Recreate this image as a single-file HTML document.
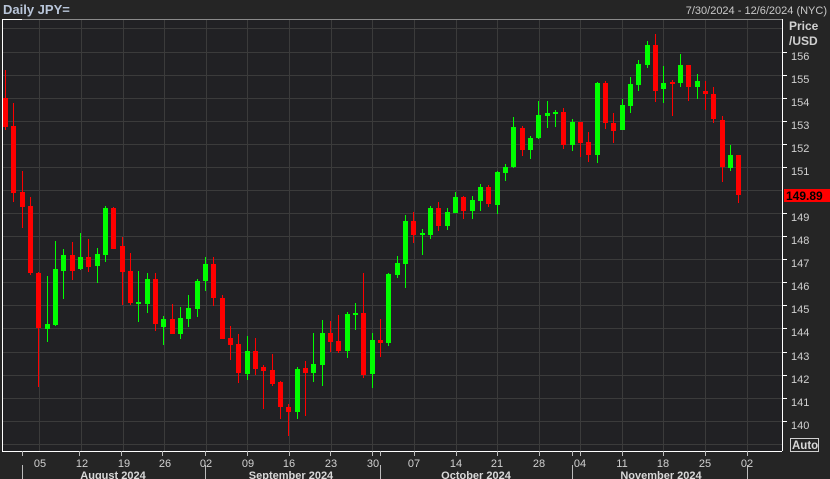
<!DOCTYPE html>
<html><head><meta charset="utf-8"><style>
html,body{margin:0;padding:0;background:#242424;}
svg{display:block;font-family:"Liberation Sans",sans-serif;}
</style></head><body>
<svg width="830" height="479" viewBox="0 0 830 479" xmlns="http://www.w3.org/2000/svg">
<rect width="830" height="479" fill="#252525"/>
<rect x="2" y="19" width="780" height="432" fill="#212124"/>
<g stroke="#3b3b3b" stroke-width="1">
<line x1="2" y1="28.5" x2="782" y2="28.5"/><line x1="2" y1="52.5" x2="782" y2="52.5"/><line x1="2" y1="75.5" x2="782" y2="75.5"/><line x1="2" y1="98.5" x2="782" y2="98.5"/><line x1="2" y1="121.5" x2="782" y2="121.5"/><line x1="2" y1="144.5" x2="782" y2="144.5"/><line x1="2" y1="167.5" x2="782" y2="167.5"/><line x1="2" y1="190.5" x2="782" y2="190.5"/><line x1="2" y1="213.5" x2="782" y2="213.5"/><line x1="2" y1="236.5" x2="782" y2="236.5"/><line x1="2" y1="259.5" x2="782" y2="259.5"/><line x1="2" y1="282.5" x2="782" y2="282.5"/><line x1="2" y1="305.5" x2="782" y2="305.5"/><line x1="2" y1="328.5" x2="782" y2="328.5"/><line x1="2" y1="352.5" x2="782" y2="352.5"/><line x1="2" y1="375.5" x2="782" y2="375.5"/><line x1="2" y1="398.5" x2="782" y2="398.5"/><line x1="2" y1="421.5" x2="782" y2="421.5"/><line x1="2" y1="444.5" x2="782" y2="444.5"/>
<line x1="39.5" y1="19" x2="39.5" y2="451"/><line x1="81.5" y1="19" x2="81.5" y2="451"/><line x1="123.5" y1="19" x2="123.5" y2="451"/><line x1="164.5" y1="19" x2="164.5" y2="451"/><line x1="206.5" y1="19" x2="206.5" y2="451"/><line x1="247.5" y1="19" x2="247.5" y2="451"/><line x1="289.5" y1="19" x2="289.5" y2="451"/><line x1="331.5" y1="19" x2="331.5" y2="451"/><line x1="372.5" y1="19" x2="372.5" y2="451"/><line x1="414.5" y1="19" x2="414.5" y2="451"/><line x1="456.5" y1="19" x2="456.5" y2="451"/><line x1="497.5" y1="19" x2="497.5" y2="451"/><line x1="539.5" y1="19" x2="539.5" y2="451"/><line x1="580.5" y1="19" x2="580.5" y2="451"/><line x1="622.5" y1="19" x2="622.5" y2="451"/><line x1="663.5" y1="19" x2="663.5" y2="451"/><line x1="705.5" y1="19" x2="705.5" y2="451"/><line x1="747.5" y1="19" x2="747.5" y2="451"/>
</g>
<line x1="2" y1="19.5" x2="782" y2="19.5" stroke="#8a8a8a"/>
<line x1="2" y1="19.5" x2="22" y2="19.5" stroke="#ffffff"/>
<line x1="2.5" y1="19" x2="2.5" y2="451" stroke="#ffffff"/>
<line x1="2" y1="451.5" x2="782" y2="451.5" stroke="#ffffff"/>
<line x1="782.5" y1="19" x2="782.5" y2="451" stroke="#ffffff"/>
<g fill="#ff0000" stroke="#ff0000">
<line x1="5.5" y1="70" x2="5.5" y2="130"/><rect x="3" y="98" width="5" height="29" stroke="none"/>
<line x1="13.5" y1="103" x2="13.5" y2="202"/><rect x="11" y="126" width="5" height="67" stroke="none"/>
<line x1="22.5" y1="171" x2="22.5" y2="228"/><rect x="20" y="192" width="5" height="15" stroke="none"/>
<line x1="30.5" y1="197" x2="30.5" y2="275"/><rect x="28" y="206" width="5" height="67" stroke="none"/>
<line x1="38.5" y1="272" x2="38.5" y2="387"/><rect x="36" y="273" width="5" height="55" stroke="none"/>
<line x1="72.5" y1="242" x2="72.5" y2="280"/><rect x="70" y="255" width="5" height="16" stroke="none"/>
<line x1="88.5" y1="239" x2="88.5" y2="272"/><rect x="86" y="257" width="5" height="10" stroke="none"/>
<line x1="113.5" y1="207" x2="113.5" y2="249"/><rect x="111" y="208" width="5" height="41" stroke="none"/>
<line x1="122.5" y1="237" x2="122.5" y2="305"/><rect x="120" y="246" width="5" height="26" stroke="none"/>
<line x1="130.5" y1="253" x2="130.5" y2="305"/><rect x="128" y="271" width="5" height="32" stroke="none"/>
<line x1="155.5" y1="273" x2="155.5" y2="331"/><rect x="153" y="279" width="5" height="45" stroke="none"/>
<line x1="172.5" y1="304" x2="172.5" y2="333"/><rect x="170" y="319" width="5" height="15" stroke="none"/>
<line x1="213.5" y1="257" x2="213.5" y2="306"/><rect x="211" y="264" width="5" height="34" stroke="none"/>
<line x1="222.5" y1="295" x2="222.5" y2="339"/><rect x="220" y="298" width="5" height="41" stroke="none"/>
<line x1="230.5" y1="326" x2="230.5" y2="360"/><rect x="228" y="338" width="5" height="7" stroke="none"/>
<line x1="238.5" y1="334" x2="238.5" y2="383"/><rect x="236" y="344" width="5" height="29" stroke="none"/>
<line x1="255.5" y1="338" x2="255.5" y2="375"/><rect x="253" y="351" width="5" height="18" stroke="none"/>
<line x1="263.5" y1="365" x2="263.5" y2="409"/><rect x="261" y="367" width="5" height="4" stroke="none"/>
<line x1="272.5" y1="354" x2="272.5" y2="386"/><rect x="270" y="370" width="5" height="14" stroke="none"/>
<line x1="280.5" y1="381" x2="280.5" y2="419"/><rect x="278" y="382" width="5" height="25" stroke="none"/>
<line x1="288.5" y1="404" x2="288.5" y2="436"/><rect x="286" y="407" width="5" height="5" stroke="none"/>
<line x1="305.5" y1="361" x2="305.5" y2="416"/><rect x="303" y="368" width="5" height="5" stroke="none"/>
<line x1="330.5" y1="321" x2="330.5" y2="352"/><rect x="328" y="333" width="5" height="9" stroke="none"/>
<line x1="338.5" y1="315" x2="338.5" y2="353"/><rect x="336" y="341" width="5" height="10" stroke="none"/>
<line x1="363.5" y1="273" x2="363.5" y2="378"/><rect x="361" y="313" width="5" height="62" stroke="none"/>
<line x1="380.5" y1="319" x2="380.5" y2="357"/><rect x="378" y="340" width="5" height="3" stroke="none"/>
<line x1="413.5" y1="212" x2="413.5" y2="243"/><rect x="411" y="221" width="5" height="14" stroke="none"/>
<line x1="438.5" y1="202" x2="438.5" y2="231"/><rect x="436" y="208" width="5" height="18" stroke="none"/>
<line x1="463.5" y1="196" x2="463.5" y2="219"/><rect x="461" y="197" width="5" height="14" stroke="none"/>
<line x1="488.5" y1="185" x2="488.5" y2="207"/><rect x="486" y="187" width="5" height="17" stroke="none"/>
<line x1="522.5" y1="126" x2="522.5" y2="156"/><rect x="520" y="128" width="5" height="22" stroke="none"/>
<line x1="563.5" y1="108" x2="563.5" y2="149"/><rect x="561" y="112" width="5" height="33" stroke="none"/>
<line x1="580.5" y1="122" x2="580.5" y2="157"/><rect x="578" y="122" width="5" height="21" stroke="none"/>
<line x1="588.5" y1="132" x2="588.5" y2="162"/><rect x="586" y="142" width="5" height="13" stroke="none"/>
<line x1="605.5" y1="81" x2="605.5" y2="129"/><rect x="603" y="83" width="5" height="40" stroke="none"/>
<line x1="613.5" y1="113" x2="613.5" y2="143"/><rect x="611" y="123" width="5" height="8" stroke="none"/>
<line x1="655.5" y1="34" x2="655.5" y2="102"/><rect x="653" y="45" width="5" height="46" stroke="none"/>
<line x1="672.5" y1="80" x2="672.5" y2="116"/><rect x="670" y="82" width="5" height="2" stroke="none"/>
<line x1="688.5" y1="65" x2="688.5" y2="101"/><rect x="686" y="65" width="5" height="22" stroke="none"/>
<line x1="705.5" y1="81" x2="705.5" y2="110"/><rect x="703" y="91" width="5" height="3" stroke="none"/>
<line x1="713.5" y1="87" x2="713.5" y2="123"/><rect x="711" y="94" width="5" height="25" stroke="none"/>
<line x1="722.5" y1="116" x2="722.5" y2="182"/><rect x="720" y="120" width="5" height="47" stroke="none"/>
<line x1="738.5" y1="155" x2="738.5" y2="203"/><rect x="736" y="155" width="5" height="40" stroke="none"/>
</g>
<g fill="#00ff00" stroke="#00ff00">
<line x1="47.5" y1="276" x2="47.5" y2="342"/><rect x="45" y="324" width="5" height="5" stroke="none"/>
<line x1="55.5" y1="241" x2="55.5" y2="326"/><rect x="53" y="269" width="5" height="56" stroke="none"/>
<line x1="63.5" y1="249" x2="63.5" y2="299"/><rect x="61" y="255" width="5" height="16" stroke="none"/>
<line x1="80.5" y1="233" x2="80.5" y2="270"/><rect x="78" y="257" width="5" height="12" stroke="none"/>
<line x1="97.5" y1="248" x2="97.5" y2="283"/><rect x="95" y="254" width="5" height="12" stroke="none"/>
<line x1="105.5" y1="206" x2="105.5" y2="262"/><rect x="103" y="208" width="5" height="47" stroke="none"/>
<line x1="138.5" y1="271" x2="138.5" y2="322"/><rect x="136" y="302" width="5" height="2" stroke="none"/>
<line x1="147.5" y1="273" x2="147.5" y2="313"/><rect x="145" y="279" width="5" height="25" stroke="none"/>
<line x1="163.5" y1="316" x2="163.5" y2="345"/><rect x="161" y="319" width="5" height="8" stroke="none"/>
<line x1="180.5" y1="307" x2="180.5" y2="339"/><rect x="178" y="318" width="5" height="16" stroke="none"/>
<line x1="188.5" y1="295" x2="188.5" y2="327"/><rect x="186" y="308" width="5" height="11" stroke="none"/>
<line x1="197.5" y1="279" x2="197.5" y2="317"/><rect x="195" y="281" width="5" height="28" stroke="none"/>
<line x1="205.5" y1="257" x2="205.5" y2="291"/><rect x="203" y="264" width="5" height="17" stroke="none"/>
<line x1="247.5" y1="336" x2="247.5" y2="380"/><rect x="245" y="351" width="5" height="23" stroke="none"/>
<line x1="297.5" y1="367" x2="297.5" y2="419"/><rect x="295" y="369" width="5" height="43" stroke="none"/>
<line x1="313.5" y1="333" x2="313.5" y2="382"/><rect x="311" y="364" width="5" height="9" stroke="none"/>
<line x1="322.5" y1="320" x2="322.5" y2="386"/><rect x="320" y="333" width="5" height="32" stroke="none"/>
<line x1="347.5" y1="312" x2="347.5" y2="358"/><rect x="345" y="314" width="5" height="37" stroke="none"/>
<line x1="355.5" y1="303" x2="355.5" y2="330"/><rect x="353" y="313" width="5" height="2" stroke="none"/>
<line x1="372.5" y1="333" x2="372.5" y2="388"/><rect x="370" y="340" width="5" height="34" stroke="none"/>
<line x1="388.5" y1="273" x2="388.5" y2="346"/><rect x="386" y="274" width="5" height="69" stroke="none"/>
<line x1="397.5" y1="256" x2="397.5" y2="278"/><rect x="395" y="263" width="5" height="12" stroke="none"/>
<line x1="405.5" y1="215" x2="405.5" y2="288"/><rect x="403" y="221" width="5" height="43" stroke="none"/>
<line x1="422.5" y1="229" x2="422.5" y2="255"/><rect x="420" y="233" width="5" height="2" stroke="none"/>
<line x1="430.5" y1="206" x2="430.5" y2="239"/><rect x="428" y="208" width="5" height="27" stroke="none"/>
<line x1="447.5" y1="208" x2="447.5" y2="230"/><rect x="445" y="212" width="5" height="14" stroke="none"/>
<line x1="455.5" y1="192" x2="455.5" y2="213"/><rect x="453" y="197" width="5" height="16" stroke="none"/>
<line x1="472.5" y1="196" x2="472.5" y2="219"/><rect x="470" y="200" width="5" height="11" stroke="none"/>
<line x1="480.5" y1="184" x2="480.5" y2="211"/><rect x="478" y="187" width="5" height="14" stroke="none"/>
<line x1="497.5" y1="171" x2="497.5" y2="214"/><rect x="495" y="172" width="5" height="33" stroke="none"/>
<line x1="505.5" y1="164" x2="505.5" y2="181"/><rect x="503" y="167" width="5" height="6" stroke="none"/>
<line x1="513.5" y1="117" x2="513.5" y2="168"/><rect x="511" y="127" width="5" height="40" stroke="none"/>
<line x1="530.5" y1="136" x2="530.5" y2="159"/><rect x="528" y="138" width="5" height="12" stroke="none"/>
<line x1="538.5" y1="101" x2="538.5" y2="139"/><rect x="536" y="115" width="5" height="23" stroke="none"/>
<line x1="547.5" y1="101" x2="547.5" y2="128"/><rect x="545" y="113" width="5" height="3" stroke="none"/>
<line x1="555.5" y1="110" x2="555.5" y2="127"/><rect x="553" y="112" width="5" height="2" stroke="none"/>
<line x1="572.5" y1="119" x2="572.5" y2="151"/><rect x="570" y="122" width="5" height="23" stroke="none"/>
<line x1="597.5" y1="82" x2="597.5" y2="163"/><rect x="595" y="83" width="5" height="72" stroke="none"/>
<line x1="622.5" y1="99" x2="622.5" y2="130"/><rect x="620" y="105" width="5" height="25" stroke="none"/>
<line x1="630.5" y1="77" x2="630.5" y2="113"/><rect x="628" y="84" width="5" height="22" stroke="none"/>
<line x1="638.5" y1="60" x2="638.5" y2="91"/><rect x="636" y="64" width="5" height="21" stroke="none"/>
<line x1="647.5" y1="41" x2="647.5" y2="68"/><rect x="645" y="45" width="5" height="20" stroke="none"/>
<line x1="663.5" y1="66" x2="663.5" y2="103"/><rect x="661" y="83" width="5" height="6" stroke="none"/>
<line x1="680.5" y1="54" x2="680.5" y2="87"/><rect x="678" y="65" width="5" height="18" stroke="none"/>
<line x1="697.5" y1="74" x2="697.5" y2="99"/><rect x="695" y="81" width="5" height="6" stroke="none"/>
<line x1="730.5" y1="145" x2="730.5" y2="171"/><rect x="728" y="155" width="5" height="13" stroke="none"/>
</g>
<text x="3" y="14" font-size="13" font-weight="bold" fill="#b9c6da">Daily JPY=</text>
<text x="827" y="14" font-size="11" fill="#c8c8c8" text-anchor="end">7/30/2024 - 12/6/2024 (NYC)</text>
<text x="789" y="30" font-size="12" font-weight="bold" fill="#d0d0d0">Price</text>
<text x="789" y="45" font-size="12" font-weight="bold" fill="#d0d0d0">/USD</text>
<g stroke="#ffffff"><line x1="782" y1="52.5" x2="787" y2="52.5"/><line x1="782" y1="75.5" x2="787" y2="75.5"/><line x1="782" y1="98.5" x2="787" y2="98.5"/><line x1="782" y1="121.5" x2="787" y2="121.5"/><line x1="782" y1="144.5" x2="787" y2="144.5"/><line x1="782" y1="167.5" x2="787" y2="167.5"/><line x1="782" y1="213.5" x2="787" y2="213.5"/><line x1="782" y1="236.5" x2="787" y2="236.5"/><line x1="782" y1="259.5" x2="787" y2="259.5"/><line x1="782" y1="282.5" x2="787" y2="282.5"/><line x1="782" y1="305.5" x2="787" y2="305.5"/><line x1="782" y1="328.5" x2="787" y2="328.5"/><line x1="782" y1="352.5" x2="787" y2="352.5"/><line x1="782" y1="375.5" x2="787" y2="375.5"/><line x1="782" y1="398.5" x2="787" y2="398.5"/><line x1="782" y1="421.5" x2="787" y2="421.5"/></g>
<g font-size="11" fill="#d0d0d0">
<text x="791" y="60">156</text><text x="791" y="83">155</text><text x="791" y="106">154</text><text x="791" y="129">153</text><text x="791" y="152">152</text><text x="791" y="175">151</text><text x="791" y="221">149</text><text x="791" y="244">148</text><text x="791" y="267">147</text><text x="791" y="290">146</text><text x="791" y="313">145</text><text x="791" y="336">144</text><text x="791" y="360">143</text><text x="791" y="383">142</text><text x="791" y="406">141</text><text x="791" y="429">140</text>
</g>
<rect x="784" y="189" width="46" height="13" fill="#ff0000"/>
<text x="786" y="200" font-size="12" font-weight="bold" fill="#000">149.89</text>
<rect x="790.5" y="438.5" width="28" height="13" fill="none" stroke="#d0d0d0"/>
<text x="792" y="449" font-size="11.5" font-weight="bold" fill="#d8d8d8">Auto</text>
<g stroke="#bbbbbb">
<line x1="22.5" y1="451" x2="22.5" y2="456"/><line x1="79.5" y1="451" x2="79.5" y2="456"/><line x1="121.5" y1="451" x2="121.5" y2="456"/><line x1="162.5" y1="451" x2="162.5" y2="456"/><line x1="205.5" y1="451" x2="205.5" y2="456"/><line x1="247.5" y1="451" x2="247.5" y2="456"/><line x1="289.5" y1="451" x2="289.5" y2="456"/><line x1="330.5" y1="451" x2="330.5" y2="456"/><line x1="372.5" y1="451" x2="372.5" y2="456"/><line x1="380.5" y1="451" x2="380.5" y2="456"/><line x1="414.5" y1="451" x2="414.5" y2="456"/><line x1="456.5" y1="451" x2="456.5" y2="456"/><line x1="497.5" y1="451" x2="497.5" y2="456"/><line x1="539.5" y1="451" x2="539.5" y2="456"/><line x1="572.5" y1="451" x2="572.5" y2="456"/><line x1="580.5" y1="451" x2="580.5" y2="456"/><line x1="622.5" y1="451" x2="622.5" y2="456"/><line x1="663.5" y1="451" x2="663.5" y2="456"/><line x1="705.5" y1="451" x2="705.5" y2="456"/><line x1="747.5" y1="451" x2="747.5" y2="456"/>
<line x1="22.5" y1="465" x2="22.5" y2="479"/><line x1="205.5" y1="465" x2="205.5" y2="479"/><line x1="380.5" y1="465" x2="380.5" y2="479"/><line x1="572.5" y1="465" x2="572.5" y2="479"/><line x1="747.5" y1="465" x2="747.5" y2="479"/>
</g>
<g font-size="11" fill="#d0d0d0" text-anchor="middle">
<text x="40" y="467">05</text><text x="82" y="467">12</text><text x="124" y="467">19</text><text x="165" y="467">26</text><text x="206" y="467">02</text><text x="248" y="467">09</text><text x="289" y="467">16</text><text x="331" y="467">23</text><text x="373" y="467">30</text><text x="414" y="467">07</text><text x="456" y="467">14</text><text x="497" y="467">21</text><text x="539" y="467">28</text><text x="580" y="467">04</text><text x="622" y="467">11</text><text x="663" y="467">18</text><text x="705" y="467">25</text><text x="747" y="467">02</text>
</g>
<g font-size="11" font-weight="bold" fill="#d8d8d8" text-anchor="middle">
<text x="113" y="479">August 2024</text><text x="291" y="479">September 2024</text><text x="476" y="479">October 2024</text><text x="661" y="479">November 2024</text>
</g>
</svg>
</body></html>
